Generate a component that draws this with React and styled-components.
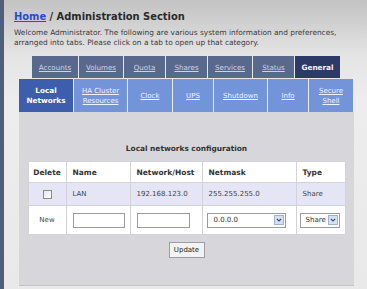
import React from "react";
import styled, { createGlobalStyle } from "styled-components";

const GlobalStyle = createGlobalStyle`
  html, body {
    margin: 0;
    padding: 0;
  }
  body {
    font-family: "DejaVu Sans", Verdana, sans-serif;
    background: #ececec;
  }
`;

const Page = styled.div`
  width: 367px;
  height: 289px;
  box-sizing: border-box;
  border-left: 4px solid #4f5f79;
  background: linear-gradient(to bottom, #c2c2c2 0px, #e4e4e4 55px, #ededed 100px, #e9e9e9 289px);
  overflow: hidden;
`;

const Heading = styled.h1`
  margin: 0;
  padding: 9px 0 0 10px;
  font-family: "DejaVu Sans Condensed", "DejaVu Sans", sans-serif;
  font-size: 11px;
  line-height: 15px;
  font-weight: bold;
  color: #2a2a2a;

  a {
    color: #1f4fd2;
    text-decoration: underline;
  }
`;

const Intro = styled.p`
  margin: 4px 0 0 10px;
  width: 330px;
  font-size: 7.4px;
  line-height: 10px;
  color: #3a3a3a;
`;

const TabArea = styled.div`
  margin: 8px 0 0 15px;
  width: 335px;
`;

const TopRow = styled.div`
  display: flex;
  gap: 1px;
  padding-left: 13px;
  height: 22px;
`;

const TopTab = styled.a`
  width: ${(p) => p.$w}px;
  display: flex;
  align-items: center;
  justify-content: center;
  font-size: ${(p) => (p.$active ? "7.3px" : "7.1px")};
  font-weight: ${(p) => (p.$active ? "bold" : "normal")};
  color: ${(p) => (p.$active ? "#f4f4fa" : "#cdd4e4")};
  text-decoration: ${(p) => (p.$active ? "none" : "underline")};
  background: ${(p) => (p.$active ? "#2d3a68" : "#59698d")};
`;

const SubRow = styled.div`
  display: flex;
  gap: 1px;
  margin-top: 1px;
  height: 33px;
`;

const SubTab = styled.a`
  width: ${(p) => p.$w}px;
  display: flex;
  align-items: center;
  justify-content: center;
  text-align: center;
  font-size: ${(p) => (p.$active ? "7.3px" : "7px")};
  line-height: 10px;
  font-weight: ${(p) => (p.$active ? "bold" : "normal")};
  color: ${(p) => (p.$active ? "#ffffff" : "#eef2ff")};
  text-decoration: ${(p) => (p.$active ? "none" : "underline")};
  background: ${(p) => (p.$active ? "#3c5eac" : "#7394d8")};
`;

const Panel = styled.div`
  height: 174px;
  box-sizing: border-box;
  background: #d7d6da;
  border-bottom: 1px solid #c4c4c8;
  padding-top: 31px;
  display: flex;
  flex-direction: column;
  align-items: center;
`;

const Title = styled.div`
  font-size: 7.4px;
  line-height: 12px;
  font-weight: bold;
  color: #333;
  margin-bottom: 6px;
`;

const Table = styled.table`
  width: 317px;
  border-collapse: collapse;
  table-layout: fixed;
  font-size: 7px;
  color: #444;
`;

const Row = styled.tr`
  height: ${(p) => p.$h}px;
  background: ${(p) => p.$bg || "#ffffff"};
`;

const HeadCell = styled.th`
  border: 1px solid #d2d2d8;
  font-size: 7.5px;
  font-weight: bold;
  color: #333;
  text-align: ${(p) => (p.$center ? "center" : "left")};
  padding: 0 0 0 ${(p) => (p.$center ? 0 : 6)}px;
`;

const Cell = styled.td`
  border: 1px solid #d2d2d8;
  text-align: ${(p) => (p.$center ? "center" : "left")};
  padding: 0 0 0 ${(p) => p.$pad ?? (p.$center ? 0 : 6)}px;
  vertical-align: middle;
`;

const Check = styled.span`
  display: inline-block;
  width: 7px;
  height: 7px;
  border: 1px solid #8a8a92;
  background: linear-gradient(135deg, #e6e6ea, #ffffff);
  vertical-align: middle;
`;

const TextBox = styled.div`
  width: ${(p) => p.$w}px;
  height: 13px;
  border: 1px solid #9a9aa2;
  background: #fff;
`;

const Select = styled.div`
  width: ${(p) => p.$w}px;
  height: 13px;
  border: 1px solid #9a9aa2;
  background: #fff;
  display: flex;
  align-items: center;
  justify-content: space-between;
  padding: 0 1px 0 ${(p) => p.$pad}px;
  font-size: 7px;
  color: #333;
`;

const Arrow = styled.span`
  width: 8px;
  height: 8px;
  border: 1px solid #9fb2cf;
  background: #d4e0f4;
  display: flex;
  align-items: center;
  justify-content: center;
`;

const Button = styled.div`
  margin-top: 7px;
  width: 34px;
  height: 14px;
  border: 1px solid #9c9ca4;
  background: #f3f3f3;
  display: flex;
  align-items: center;
  justify-content: center;
  font-size: 7px;
  color: #222;
`;

const topTabs = [
  ["Accounts", 46],
  ["Volumes", 44],
  ["Quota", 41],
  ["Shares", 41],
  ["Services", 44],
  ["Status", 41],
  ["General", 45, true],
];

const subTabs = [
  [["Local", "Networks"], 54, true],
  [["HA Cluster", "Resources"], 53],
  [["Clock"], 44],
  [["UPS"], 40],
  [["Shutdown"], 53],
  [["Info"], 40],
  [["Secure", "Shell"], 44],
];

const Chevron = () => (
  <Arrow>
    <svg width="6" height="4" viewBox="0 0 6 4">
      <path d="M0.8 0.8 L3 3 L5.2 0.8" fill="none" stroke="#3a4a6a" strokeWidth="1.1" />
    </svg>
  </Arrow>
);

export default function App() {
  return (
    <>
      <GlobalStyle />
      <Page>
        <Heading>
          <a href="#">Home</a> / Administration Section
        </Heading>
        <Intro>
          Welcome Administrator. The following are various system information and preferences,
          arranged into tabs. Please click on a tab to open up that category.
        </Intro>
        <TabArea>
          <TopRow>
            {topTabs.map(([label, w, active]) => (
              <TopTab key={label} $w={w} $active={active}>
                {label}
              </TopTab>
            ))}
          </TopRow>
          <SubRow>
            {subTabs.map(([lines, w, active]) => (
              <SubTab key={lines[0]} $w={w} $active={active}>
                <span>
                  {lines.map((l, i) => (
                    <React.Fragment key={l}>
                      {i > 0 && <br />}
                      {l}
                    </React.Fragment>
                  ))}
                </span>
              </SubTab>
            ))}
          </SubRow>
          <Panel>
            <Title>Local networks configuration</Title>
            <Table>
              <colgroup>
                <col style={{ width: 38 }} />
                <col style={{ width: 64 }} />
                <col style={{ width: 72 }} />
                <col style={{ width: 94 }} />
                <col style={{ width: 49 }} />
              </colgroup>
              <thead>
                <Row $h={21}>
                  <HeadCell $center>Delete</HeadCell>
                  <HeadCell>Name</HeadCell>
                  <HeadCell>Network/Host</HeadCell>
                  <HeadCell>Netmask</HeadCell>
                  <HeadCell>Type</HeadCell>
                </Row>
              </thead>
              <tbody>
                <Row $h={23} $bg="#e5e5f5">
                  <Cell $center>
                    <Check />
                  </Cell>
                  <Cell>LAN</Cell>
                  <Cell>192.168.123.0</Cell>
                  <Cell>255.255.255.0</Cell>
                  <Cell>Share</Cell>
                </Row>
                <Row $h={29}>
                  <Cell $center>New</Cell>
                  <Cell>
                    <TextBox $w={50} />
                  </Cell>
                  <Cell>
                    <TextBox $w={51} />
                  </Cell>
                  <Cell $pad={4}>
                    <Select $w={70} $pad={6}>
                      0.0.0.0
                      <Chevron />
                    </Select>
                  </Cell>
                  <Cell $pad={3}>
                    <Select $w={32} $pad={5}>
                      Share
                      <Chevron />
                    </Select>
                  </Cell>
                </Row>
              </tbody>
            </Table>
            <Button>Update</Button>
          </Panel>
        </TabArea>
      </Page>
    </>
  );
}
